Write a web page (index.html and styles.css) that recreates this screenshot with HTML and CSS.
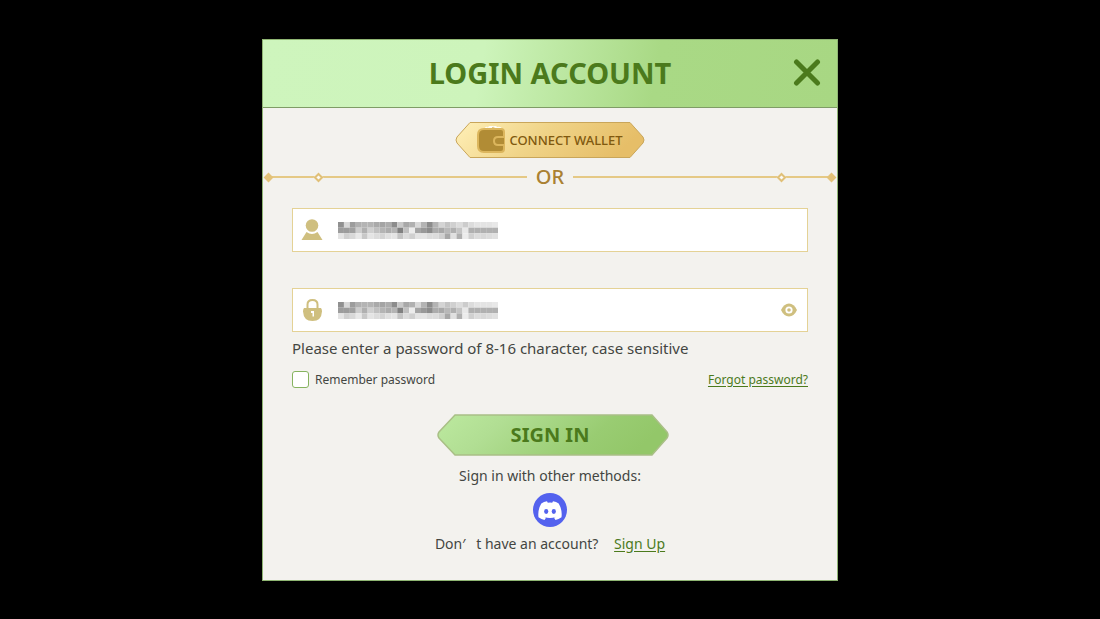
FILE: index.html
```html
<!DOCTYPE html>
<html lang="en">
<head>
  <meta charset="UTF-8">
  <meta name="viewport" content="width=device-width, initial-scale=1.0">
  <title>Login Account</title>

  <link rel="stylesheet" href="styles.css">
</head>
<body>
  <main class="modal">
    <header class="modal-header">
      <h1>LOGIN ACCOUNT</h1>
      <button class="close-btn" type="button" aria-label="Close">
        <svg width="28" height="28" viewBox="0 0 28 28"><path d="M3.500 3L24.500 24M24.500 3L3.500 24" stroke="#4b7a1c" stroke-width="5" stroke-linecap="round"/></svg>
      </button>
    </header>

    <form class="login-form">
      <button class="wallet-btn" type="button">
        <svg class="btn-shape" width="190" height="36" viewBox="0 0 190 36">
          <defs>
            <linearGradient id="gold" x1="0" y1="0" x2="1" y2="0.2">
              <stop offset="0" stop-color="#fff0b8"/>
              <stop offset="0.5" stop-color="#f0d488"/>
              <stop offset="1" stop-color="#e6be68"/>
            </linearGradient>
          </defs>
          <path d="M15 .5H175L188 15Q190 18 188 21L175 35.500H15L2 21Q0 18 2 15Z" fill="url(#gold)" stroke="#c9a65a"/>
        </svg>
        <svg class="wallet-icon" width="28" height="28" viewBox="0 0 28 28">
          <path d="M8 4Q7 0 11 1Q13-1 16 0Q19-1 20 1Q25 0 25 4Z" fill="#fffdf4"/>
          <path d="M10 2l3 2 3-3 4 3" fill="none" stroke="#e3c987"/>
          <path d="M7 3H24Q27 3 27 6V23Q27 26 24 26H7Q1 26 1 20V9Q1 3 7 3Z" fill="#b18c35" stroke="#dcb65d" stroke-width="2"/>
          <path d="M27 11H21Q17 11 17 15T21 19H27" fill="#b18c35" stroke="#dcb65d" stroke-width="2"/>
        </svg>
        <span>CONNECT WALLET</span>
      </button>

      <div class="divider">
        <span class="line line-left"></span>
        <span class="divider-text">OR</span>
        <span class="line line-right"></span>
      </div>

      <div class="fields">
        <div class="field">
          <label for="account" aria-label="Account">
            <svg width="22" height="22" viewBox="0 0 22 22" fill="#cfbf7f">
              <circle cx="11" cy="6.500" r="6.300"/>
              <path d="M5.500 13Q11 17 16.500 13L21.500 21H.5Z"/>
            </svg>
          </label>
          <div class="field-body">
            <input id="account" type="text">
            <svg class="mask" viewBox="0 0 27 3" preserveAspectRatio="none"></svg>
          </div>
        </div>

        <div class="field">
          <label for="password" aria-label="Password">
            <svg width="22" height="22" viewBox="0 0 22 22">
              <path d="M6.500 11V5.500Q6.500 1 11.500 1T16.500 5.500V11" fill="none" stroke="#cfbf7f" stroke-width="2"/>
              <path d="M3 9H20Q21 10 21 12.500Q20.500 22 11.500 22T2 12.500Q2 10 3 9Z" fill="#cfbf7f"/>
              <path d="M10 12h3v5.500H11.500V14H10z" fill="#fff"/>
            </svg>
          </label>
          <div class="field-body">
            <input id="password" type="password">
            <svg class="mask" viewBox="0 0 27 3" preserveAspectRatio="none"></svg>
          </div>
          <button class="eye-btn" type="button" aria-label="Show password">
            <svg width="16" height="14" viewBox="0 0 16 14">
              <path d="M0 7Q3 .5 8 .5T16 7Q13 13.500 8 13.500T0 7Z" fill="#cfbf7f"/>
              <circle cx="8" cy="7" r="2.700" fill="#cfbf7f" stroke="#fff" stroke-width="1.800"/>
            </svg>
          </button>
        </div>

        <p class="hint">Please enter a password of 8-16 character, case sensitive</p>

        <div class="options">
          <label class="remember"><input type="checkbox">Remember password</label>
          <a href="#">Forgot password?</a>
        </div>
      </div>

      <button class="signin-btn" type="submit">
        <svg class="btn-shape" width="232" height="42" viewBox="0 0 232 42">
          <defs>
            <linearGradient id="green" x1="0" y1="0" x2="1" y2="0.2">
              <stop offset="0" stop-color="#bce99f"/>
              <stop offset="0.3" stop-color="#b1de93"/>
              <stop offset="0.75" stop-color="#99cc72"/>
              <stop offset="1" stop-color="#93c769"/>
            </linearGradient>
          </defs>
          <path d="M18 1H215L230 18Q232 21 230 24L215 41H18L2 24Q0 21 2 18Z" fill="url(#green)" stroke="#a9bf86" stroke-width="1.500"/>
        </svg>
        <span>SIGN IN</span>
      </button>

      <p class="methods">Sign in with other methods:</p>
      <button class="discord-btn" type="button" aria-label="Discord">
        <svg width="34" height="34" viewBox="0 0 34 34">
          <circle cx="17" cy="17" r="17" fill="#5362ee"/>
          <path d="M8.300 10.500Q10.800 8.800 14 8.300L14.800 9.800Q17 9.400 19.200 9.800L20 8.300Q23.200 8.800 25.700 10.500Q29.500 17 28.500 24.300Q25.500 26.300 22.500 27L21 24.800L23 23.800Q17 26.200 11 23.800L13 24.800L11.500 27Q8.500 26.300 5.500 24.300Q4.500 17 8.300 10.500Z" fill="#fff"/>
          <ellipse cx="13.200" cy="18.500" rx="2.100" ry="2.400" fill="#5362ee"/>
          <ellipse cx="20.800" cy="18.500" rx="2.100" ry="2.400" fill="#5362ee"/>
        </svg>
      </button>
      <p class="signup">Don<span class="wide-quote">′</span>t have an account? <a href="#">Sign Up</a></p>
    </form>
  </main>

  <script>
    // Grey level of every mosaic block, one hex pair per column
    const rows = [
      '90d89cb0b4b4aaa4ac8cc8a8b0d8b48cb4d4c4d0dcccdce4e4e4e8',
      '9c9ca0ccb0d0c0b4acb480c0eca4988caca8b8b0c4e8b0b0b0b0b0',
      'e4d0d8e8c8e4dcd4e0e4c4dcd0e4e4dcdcd0a8e0b0ecd0dcd8dce0'
    ];

    document.querySelectorAll('.mask').forEach((mask) => {
      rows.forEach((row, y) => {
        for (let x = 0; x < row.length / 2; x++) {
          const grey = row.substr(x * 2, 2);
          const rect = document.createElementNS('http://www.w3.org/2000/svg', 'rect');
          rect.setAttribute('x', x);
          rect.setAttribute('y', y);
          rect.setAttribute('width', 1);
          rect.setAttribute('height', 1);
          rect.setAttribute('fill', '#' + grey + grey + grey);
          mask.appendChild(rect);
        }
      });
    });
  </script>
</body>
</html>
```
FILE: styles.css
```css
* {
  box-sizing: border-box;
}

body {
  margin: 0;
  min-height: 100vh;
  display: flex;
  justify-content: center;
  align-items: center;
  background: #000;
  color: #434642;
  font-family: 'Noto Sans', 'Open Sans', sans-serif;
}

h1,
p {
  margin: 0;
}

button {
  padding: 0;
  border: none;
  background: none;
  font-family: inherit;
  cursor: pointer;
}

svg {
  display: block;
}

a {
  color: #4b7a1c;
  text-underline-offset: 2px;
}

.modal {
  width: 100%;
  max-width: 576px;
  background: #f3f2ee;
  border: 1px solid #8fb573;
}

.modal-header {
  display: grid;
  grid-template-columns: 1fr auto 1fr;
  align-items: center;
  height: 68px;
  padding: 0 16px;
  background: linear-gradient(100deg, #cef5bd 0%, #cdf4bb 38%, #a9d985 68%, #a8d783 100%);
  border-bottom: 1px solid #7f9c66;
}

h1 {
  grid-column: 2;
  color: #4b7a1c;
  font-size: 29px;
  line-height: 40px;
}

.close-btn {
  justify-self: end;
}

.login-form {
  display: flex;
  flex-direction: column;
  align-items: center;
  padding: 14px 0 24px;
}

.wallet-btn,
.signin-btn {
  position: relative;
  display: flex;
  justify-content: center;
  align-items: center;
}

.btn-shape {
  position: absolute;
  top: 0;
  left: 0;
}

.wallet-btn span,
.wallet-icon,
.signin-btn span {
  position: relative;
}

.wallet-btn {
  gap: 4px;
  width: 190px;
  height: 36px;
  color: #80590f;
  font-size: 13px;
  font-weight: 500;
}

.divider {
  display: flex;
  align-items: center;
  gap: 9px;
  width: 100%;
  height: 38px;
  padding: 0 5px;
}

.divider-text {
  color: #aa8132;
  font-size: 20px;
  font-weight: 500;
}

.line {
  position: relative;
  flex: 1;
  height: 2px;
  background: #e5c985;
}

/* Diamonds at the ends of the divider */
.line::before,
.line::after {
  content: '';
  position: absolute;
  top: -2px;
  box-sizing: border-box;
  width: 7px;
  height: 7px;
  background: #e3c279;
  transform: rotate(45deg);
}

.line::after {
  background: #fbfaf6;
  border: 2px solid #e0c078;
}

.line-left::before {
  left: -3px;
}

.line-left::after {
  left: 47px;
}

.line-right::before {
  right: -3px;
}

.line-right::after {
  right: 47px;
}

.fields {
  width: 100%;
  padding: 12px 29px 0;
}

.field {
  display: flex;
  align-items: center;
  gap: 15px;
  height: 44px;
  padding: 0 10px 0 8px;
  background: #fff;
  border: 1px solid #e4d295;
}

.field + .field {
  margin-top: 36px;
}

.field-body {
  position: relative;
  flex: 1;
}

.field-body input {
  display: block;
  width: 100%;
  height: 40px;
  padding: 0;
  border: none;
  outline: none;
  background: none;
  font-size: 15px;
}

.mask {
  position: absolute;
  top: 12px;
  left: 0;
  width: 160px;
  height: 17px;
}

.hint {
  margin-top: 4px;
  font-size: 15px;
  line-height: 24px;
}

.options {
  display: flex;
  justify-content: space-between;
  align-items: center;
  margin-top: 10px;
  font-size: 12px;
  line-height: 20px;
}

.remember {
  display: flex;
  align-items: center;
  gap: 6px;
}

.remember input {
  appearance: none;
  width: 17px;
  height: 17px;
  margin: 0;
  background: #fff;
  border: 1px solid #86b35f;
  border-radius: 3px;
}

.signin-btn {
  width: 232px;
  height: 42px;
  margin: 24px 0 8px 6px;
  padding-right: 6px;
  color: #4b7a1c;
  font-size: 20px;
  font-weight: 700;
}

.methods,
.signup {
  font-size: 14px;
  line-height: 24px;
}

.discord-btn {
  margin: 5px 0;
}

.wide-quote {
  display: inline-block;
  width: 14px;
}

.signup a {
  margin-left: 12px;
}
```
